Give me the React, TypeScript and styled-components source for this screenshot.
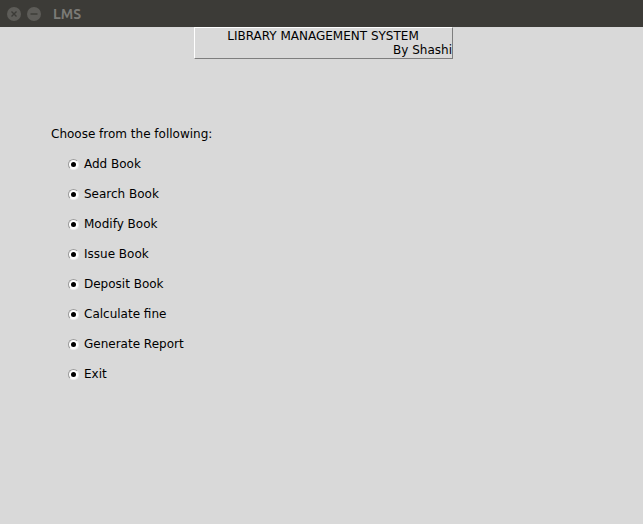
import React from "react";
import styled, { createGlobalStyle } from "styled-components";

const Global = createGlobalStyle`
  html, body { margin: 0; padding: 0; background: #d9d9d9; }
  body { font-family: "DejaVu Sans", sans-serif; }
`;

const Window = styled.div`
  width: 643px;
  height: 524px;
  background: #d9d9d9;
  display: flex;
  flex-direction: column;
  overflow: hidden;
`;

const TitleBar = styled.div`
  height: 27px;
  background: #3c3b37;
  display: flex;
  align-items: center;
  padding-left: 7px;
  gap: 6px;
  flex-shrink: 0;
`;

const WinButton = styled.div`
  width: 14px;
  height: 14px;
  border-radius: 50%;
  background: #5d5c58;
  color: #3c3b37;
  display: flex;
  align-items: center;
  justify-content: center;
`;

const WinTitle = styled.span`
  margin-left: 6px;
  font-family: "Ubuntu", "DejaVu Sans", sans-serif;
  font-weight: bold;
  font-size: 14px;
  color: #7b7a76;
`;

const Content = styled.div`
  display: flex;
  flex-direction: column;
  flex: 1;
`;

const Banner = styled.div`
  align-self: flex-start;
  margin-left: 194px;
  width: 257px;
  height: 30px;
  border-left: 1px solid #ffffff;
  border-top: 1px solid #ffffff;
  border-right: 1px solid #7e7e7e;
  border-bottom: 1px solid #7e7e7e;
  display: flex;
  flex-direction: column;
  font-size: 12px;
  color: #000;
  line-height: 14px;
`;

const BannerTitle = styled.div`
  text-align: center;
  padding-top: 1px;
  padding-right: 1px;
`;

const BannerSub = styled.div`
  text-align: right;
  font-size: 12px;
  line-height: 14px;
`;

const Prompt = styled.div`
  margin-top: 68px;
  margin-left: 51px;
  font-size: 12px;
  color: #000;
  line-height: 14px;
`;

const List = styled.div`
  display: flex;
  flex-direction: column;
  gap: 16px;
  margin-top: 16px;
  margin-left: 68px;
`;

const Item = styled.label`
  display: flex;
  align-items: center;
  gap: 5px;
  height: 14px;
  font-size: 12px;
  color: #000;
`;

const Radio = styled.span`
  width: 9px;
  height: 9px;
  border-radius: 50%;
  background: #ffffff;
  border-top: 1px solid #9a9a9a;
  border-left: 1px solid #9a9a9a;
  border-right: 1px solid #eeeeee;
  border-bottom: 1px solid #eeeeee;
  display: flex;
  align-items: center;
  justify-content: center;
  &::after {
    content: "";
    width: 5px;
    height: 5px;
    border-radius: 50%;
    background: #000;
  }
`;

const items = [
  "Add Book",
  "Search Book",
  "Modify Book",
  "Issue Book",
  "Deposit Book",
  "Calculate fine",
  "Generate Report",
  "Exit",
];

export default function App() {
  return (
    <>
      <Global />
      <Window>
        <TitleBar>
          <WinButton>
            <svg width="8" height="8" viewBox="0 0 8 8">
              <path d="M1.5 1.5 L6.5 6.5 M6.5 1.5 L1.5 6.5" stroke="#3c3b37" strokeWidth="1.4" />
            </svg>
          </WinButton>
          <WinButton>
            <svg width="8" height="8" viewBox="0 0 8 8">
              <path d="M0.5 4 L7.5 4" stroke="#3c3b37" strokeWidth="1.4" />
            </svg>
          </WinButton>
          <WinTitle>LMS</WinTitle>
        </TitleBar>
        <Content>
          <Banner>
            <BannerTitle>LIBRARY MANAGEMENT SYSTEM</BannerTitle>
            <BannerSub>By Shashi</BannerSub>
          </Banner>
          <Prompt>Choose from the following:</Prompt>
          <List>
            {items.map((t) => (
              <Item key={t}>
                <Radio />
                {t}
              </Item>
            ))}
          </List>
        </Content>
      </Window>
    </>
  );
}
